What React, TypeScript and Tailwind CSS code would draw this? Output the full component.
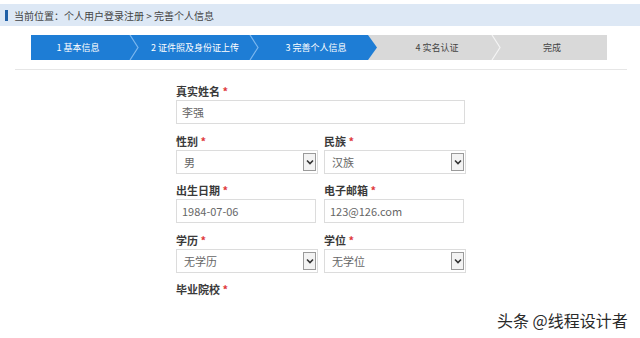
import { ReactNode } from 'react';

const FONT = { fontFamily: '"Noto Sans CJK SC", "Noto Sans", sans-serif' };

function Chevron({ color }: { color: string }) {
  return (
    <svg
      className="absolute right-[-4px] top-0 h-[25px] w-[10px]"
      viewBox="0 0 10 25"
      fill="none"
    >
      <path d="M1 0 L9 12.5 L1 25" stroke={color} strokeWidth="1.2" />
    </svg>
  );
}

function Step({ label, w, active, last }: { label: string; w: string; active: boolean; last?: boolean }) {
  return (
    <div
      className={`relative flex h-full items-center justify-center text-[9px] ${w} ${
        active ? 'text-white' : 'text-[#444]'
      }`}
    >
      {label}
      {!last && <Chevron color={active ? '#7ab6ee' : '#f4f4f4'} />}
    </div>
  );
}

function Label({ children }: { children: ReactNode }) {
  return (
    <div className="h-[14px] text-[11px] leading-[14px] font-bold text-[#3a3a3a]">
      {children} <span className="text-[#e0393c]">*</span>
    </div>
  );
}

function TextBox({ value, w }: { value: string; w: string }) {
  return (
    <div
      className={`mt-[2px] flex h-[24px] items-center border border-[#dcdcdc] bg-white pl-[5px] text-[11px] text-[#666] ${w}`}
    >
      {value}
    </div>
  );
}

function SelectBox({ value }: { value: string }) {
  return (
    <div className="mt-[2px] flex h-[24px] w-[142px] items-center justify-between border border-[#dcdcdc] bg-white pl-[7px] pr-[1px] text-[11px] text-[#666]">
      <span>{value}</span>
      <div className="flex h-[18px] w-[13px] items-center justify-center border border-[#9a9a9a] bg-[#f3f3f3]">
        <svg width="8" height="6" viewBox="0 0 8 6" fill="none">
          <path d="M1 1.5 L4 4.5 L7 1.5" stroke="#333" strokeWidth="1.6" />
        </svg>
      </div>
    </div>
  );
}

export default function App() {
  return (
    <div className="relative h-[338px] w-[640px] overflow-hidden bg-white" style={FONT}>
      {/* 当前位置 */}
      <div className="mt-[4px] flex h-[22px] items-center bg-[#dde8f5]">
        <div className="ml-[5px] h-[11px] w-[3px] bg-[#1f5fa6]" />
        <div className="ml-[6px] text-[10px] text-[#444]">当前位置：个人用户登录注册 &gt; 完善个人信息</div>
      </div>

      {/* 步骤条 */}
      <div className="ml-[31px] mt-[9px] flex h-[25px] w-[576px] bg-[#d9d9d9]">
        <div
          className="flex h-full w-[346px] bg-[#1e7dd5]"
          style={{ clipPath: 'polygon(0 0, 337px 0, 346px 50%, 337px 100%, 0 100%)' }}
        >
          <Step label="1 基本信息" w="w-[104px] pr-[10px]" active />
          <Step label="2 证件照及身份证上传" w="w-[120px]" active />
          <Step label="3 完善个人信息" w="w-[122px]" active last />
        </div>
        <Step label="4 实名认证" w="w-[120px]" active={false} />
        <Step label="完成" w="w-[110px]" active={false} last />
      </div>

      <div className="ml-[15px] mt-[9px] h-px w-[612px] bg-[#e6e6e6]" />

      {/* 表单 */}
      <div className="ml-[176px] mt-[14px] w-[290px]">
        <Label>真实姓名</Label>
        <TextBox value="李强" w="w-[289px]" />

        <div className="mt-[10px] flex gap-[6px]">
          <div>
            <Label>性别</Label>
            <SelectBox value="男" />
          </div>
          <div>
            <Label>民族</Label>
            <SelectBox value="汉族" />
          </div>
        </div>

        <div className="mt-[9px] flex gap-[8px]">
          <div>
            <Label>出生日期</Label>
            <TextBox value="1984-07-06" w="w-[140px]" />
          </div>
          <div>
            <Label>电子邮箱</Label>
            <TextBox value="123@126.com" w="w-[140px]" />
          </div>
        </div>

        <div className="mt-[10px] flex gap-[6px]">
          <div>
            <Label>学历</Label>
            <SelectBox value="无学历" />
          </div>
          <div>
            <Label>学位</Label>
            <SelectBox value="无学位" />
          </div>
        </div>

        <div className="mt-[9px]">
          <Label>毕业院校</Label>
        </div>
      </div>

      {/* 水印 */}
      <div
        className="absolute left-[497px] top-[308px] text-[16px] text-[#2a2a2a]"
        style={{ textShadow: '0 0 2px #fff' }}
      >
        头条 @线程设计者
      </div>
    </div>
  );
}
